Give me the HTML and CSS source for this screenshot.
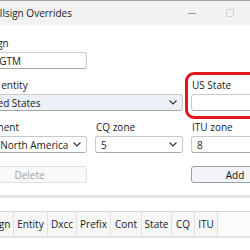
FILE: index.html
```html
<!DOCTYPE html>
<html lang="en">
<head>
    <meta charset="UTF-8">
    <title>Callsign Overrides</title>
    <link rel="stylesheet" href="styles.css">
</head>
<body>
    <div class="window">
        <div class="titlebar">
            <span class="title">Callsign Overrides</span>
            <div class="controls">
                <span class="ctl">
                    <svg width="10" height="10" viewBox="0 0 10 10"><line x1="1" y1="5.5" x2="9" y2="5.5" stroke="#9a9a9a" stroke-width="1"/></svg>
                </span>
                <span class="ctl">
                    <svg width="10" height="10" viewBox="0 0 10 10"><rect x="1.5" y="1.5" width="7" height="7" rx="1" fill="none" stroke="#cfcfcf" stroke-width="1"/></svg>
                </span>
                <span class="ctl">
                    <svg width="10" height="10" viewBox="0 0 10 10"><path d="M1 1 L9 9 M9 1 L1 9" stroke="#9a9a9a" stroke-width="1"/></svg>
                </span>
            </div>
        </div>

        <div class="form">
            <div class="field row1">
                <label>Callsign</label>
                <div class="input">WA4GTM</div>
            </div>

            <div class="field span2 row2">
                <label>DXCC entity</label>
                <div class="select tinted">
                    <span>United States</span>
                    <svg width="8" height="5" viewBox="0 0 8 5"><path d="M0.5 0.5 L4 4 L7.5 0.5" fill="none" stroke="#3a3a3a" stroke-width="1.2"/></svg>
                </div>
            </div>
            <div class="field highlight row2 col3">
                <label>US State</label>
                <div class="input"></div>
            </div>

            <div class="field row3">
                <label>Continent</label>
                <div class="select">
                    <span>NA - North America</span>
                    <svg width="8" height="5" viewBox="0 0 8 5"><path d="M0.5 0.5 L4 4 L7.5 0.5" fill="none" stroke="#3a3a3a" stroke-width="1.2"/></svg>
                </div>
            </div>
            <div class="field row3">
                <label>CQ zone</label>
                <div class="select">
                    <span>5</span>
                    <svg width="8" height="5" viewBox="0 0 8 5"><path d="M0.5 0.5 L4 4 L7.5 0.5" fill="none" stroke="#3a3a3a" stroke-width="1.2"/></svg>
                </div>
            </div>
            <div class="field row3">
                <label>ITU zone</label>
                <div class="select">
                    <span>8</span>
                    <svg width="8" height="5" viewBox="0 0 8 5"><path d="M0.5 0.5 L4 4 L7.5 0.5" fill="none" stroke="#3a3a3a" stroke-width="1.2"/></svg>
                </div>
            </div>

            <button class="btn disabled">Delete</button>
            <button class="btn add">Add</button>
        </div>

        <div class="splitter"></div>

        <div class="grid">
            <div class="grid-head">
                <div class="th w-call">Callsign</div>
                <div class="th w-entity">Entity</div>
                <div class="th w-dxcc">Dxcc</div>
                <div class="th w-prefix">Prefix</div>
                <div class="th w-cont">Cont</div>
                <div class="th w-state">State</div>
                <div class="th w-cq">CQ</div>
                <div class="th w-itu">ITU</div>
                <div class="th-fill"></div>
            </div>
            <div class="grid-body"></div>
        </div>
    </div>
</body>
</html>
```

FILE: styles.css
```css
body {
    margin: 0;
    width: 250px;
    height: 250px;
    overflow: hidden;
    background-color: #ececec;
    font-family: "Open Sans", "Noto Sans", sans-serif;
    font-size: 10px;
    color: #1a1a1a;
}

.window {
    width: 323px;
    margin-left: -36px;
    background-color: #fff;
}

.titlebar {
    height: 25px;
    box-sizing: border-box;
    border-top: 1px solid #a3a3a3;
    background-color: #f2f2f2;
    display: flex;
    align-items: center;
}

.title {
    padding-left: 24px;
    flex: 1;
    padding-bottom: 1px;
}

.controls {
    display: flex;
}

.ctl {
    width: 38px;
    height: 24px;
    display: flex;
    align-items: center;
    justify-content: center;
}

.form {
    display: grid;
    grid-template-columns: 115px 88px 88px;
    column-gap: 8px;
    row-gap: 10px;
    padding: 12px 8px 12px 8px;
}

.field {
    display: flex;
    flex-direction: column;
    position: relative;
}

.row1 { grid-row: 1; grid-column: 1; }
.row2 { grid-row: 2; }
.row3 { grid-row: 3; }
.col3 { grid-column: 3; }

.field label {
    height: 15px;
    line-height: 12px;
    padding-left: 1px;
}

.span2 {
    grid-column: 1 / span 2;
}

.input, .select {
    height: 17px;
    box-sizing: border-box;
    border: 1px solid #c9c9c9;
    border-bottom-color: #a8a8a8;
    border-radius: 3px;
    background-color: #fff;
    padding: 0 5px;
    display: flex;
    align-items: center;
    white-space: nowrap;
}

.select {
    justify-content: space-between;
    padding-right: 5px;
}

.tinted {
    background-color: #edf1f7;
}

.highlight::after {
    content: "";
    position: absolute;
    top: -7px;
    left: -6px;
    right: -8px;
    bottom: -8px;
    border: 3px solid #e3151d;
    border-radius: 9px;
}

.btn {
    height: 17px;
    margin-top: 3px;
    font-family: inherit;
    font-size: 10px;
    border-radius: 3px;
    padding: 0;
}

.btn.disabled {
    grid-row: 4;
    grid-column: 1;
    background-color: #f8f9fb;
    border: 1px solid #dde0e5;
    color: #a2a2a2;
}

.btn.add {
    grid-row: 4;
    grid-column: 3;
    background-color: #f3f5f9;
    border: 1px solid #9a9ea6;
    color: #111;
}

.splitter {
    height: 3px;
    background-color: #e5e5e5;
}

.grid {
    margin-top: 13px;
    margin-left: 8px;
    border-top: 1px solid #d4d4d4;
    border-bottom: 1px solid #727272;
}

.grid-head {
    display: flex;
    height: 24px;
    border-bottom: 2px solid #e3e3e3;
    background-color: #f7f7f7;
}

.th {
    box-sizing: border-box;
    border-right: 1px solid #e0e0e0;
    display: flex;
    align-items: center;
    justify-content: center;
    white-space: nowrap;
    padding-bottom: 1px;
}

.th-fill {
    flex: 1;
    background-color: #fbfbfb;
}

.w-call { width: 42px; }
.w-entity { width: 34px; }
.w-dxcc { width: 29px; }
.w-prefix { width: 34px; }
.w-cont { width: 31px; }
.w-state { width: 30px; }
.w-cq { width: 23px; }
.w-itu { width: 23px; }

.grid-body {
    height: 12px;
    background-color: #fff;
}
```
